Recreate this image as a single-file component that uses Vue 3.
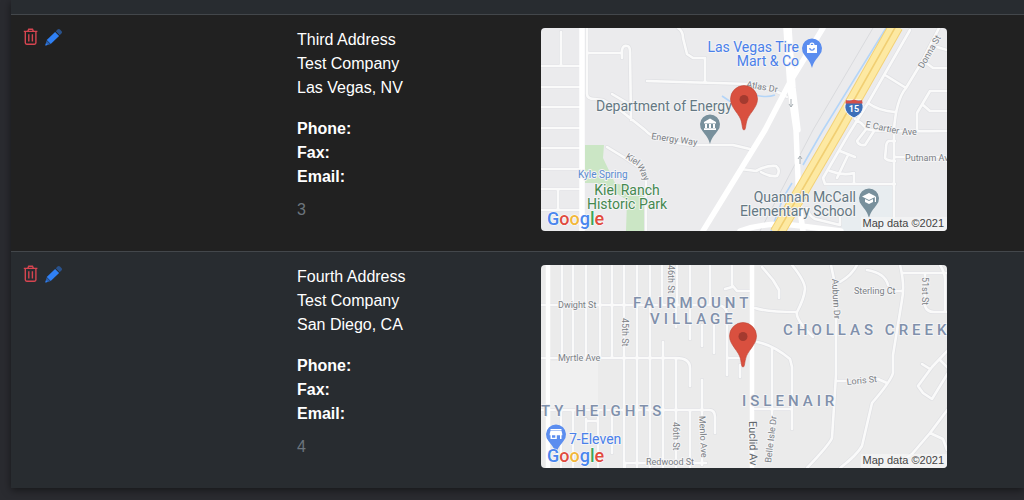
<template>
  <div class="page">
    <div class="panel">
      <table>
        <colgroup>
          <col class="c-actions" />
          <col class="c-address" />
          <col />
        </colgroup>
        <tbody>
          <tr v-for="a in addresses" :key="a.id">
            <td>
              <div class="actions">
                <button class="del" aria-label="Delete">
                  <svg width="16" height="18" viewBox="0 0 16 18" fill="none" stroke="currentColor" stroke-width="1.4">
                    <path d="M.8 3.400h13.600M4.800 3.200l.9-2h3.800l.9 2M2.300 3.600v11.200c0 .9.5 1.400 1.400 1.400h7.800c.9 0 1.400-.5 1.400-1.400V3.600M5.800 6.200v7.200M9.400 6.200v7.200" />
                  </svg>
                </button>
                <button class="edit" aria-label="Edit">
                  <svg width="17" height="17" viewBox="0 0 17 17">
                    <path d="M10.100 2.900l4 4-8.400 8.200-4-4z" fill="#2f80f5" />
                    <path d="M1.600 11.600L.4 16.500l4.900-1.200z" fill="#2a62b4" />
                    <path d="M10.800 2.300l1.700-1.700c.8-.8 1.700-.8 2.500 0l1.400 1.400c.8.8.8 1.700 0 2.500l-1.700 1.700z" fill="#29528c" />
                    <path d="M.9 14.200l-.6 2.400 2.400-.6z" fill="#2f80f5" />
                  </svg>
                </button>
              </div>
            </td>
            <td>
              <p>{{ a.name }}<br />{{ a.company }}<br />{{ a.city }}</p>
              <p class="contact"><b>Phone:</b><br /><b>Fax:</b><br /><b>Email:</b></p>
              <div class="num">{{ a.id }}</div>
            </td>
            <td>
              <svg class="map" viewBox="0 0 406 203">
                <rect width="406" height="203" :fill="a.map.ground" />
                <path v-for="(s, i) in a.map.areas" :key="'s' + i" :d="s.d" :fill="s.fill" />
                <path v-for="(s, i) in a.map.lines" :key="'l' + i" :d="s.d" :stroke="s.color" :stroke-width="s.w" fill="none" />
                <g fill="none" stroke-linecap="round" stroke-linejoin="round">
                  <path :d="a.map.roads" stroke="#e0e1e4" stroke-width="4" />
                  <path :d="a.map.roads" stroke="#fafafa" stroke-width="2.600" />
                  <path :d="a.map.wide" stroke="#fff" :stroke-width="a.map.wideW" />
                </g>
                <g v-if="a.map.highway" fill="none">
                  <path :d="a.map.highway" stroke="#f3d277" stroke-width="15" />
                  <path :d="a.map.highway" stroke="#fde9a2" stroke-width="13" />
                  <path :d="a.map.highway" stroke="#f1cf73" stroke-width="1.600" />
                </g>
                <g v-if="a.map.highway">
                  <path d="M306 72h14l2 5c1 6-3 10-9 13-6-3-10-7-9-13z" fill="#3d6fb8" stroke="#fff" />
                  <path d="M305 72q4 1.500 8-.5q4 2 8 .5l.7 3.500h-17.400z" fill="#d3504a" />
                  <text x="313" y="84" class="shield">15</text>
                  <path d="M250 71v8m-2-3l2 3 2-3M259 136v-8m-2 3l2-3 2 3" fill="none" stroke="#a9b0b5" />
                </g>
                <text
                  v-for="(t, i) in a.map.labels"
                  :key="'t' + i"
                  :class="t.cls"
                  :x="t.x"
                  :y="t.y"
                  :transform="t.r ? `rotate(${t.r} ${t.x} ${t.y})` : null"
                >{{ t.text }}</text>
                <g v-for="(p, i) in a.map.pins" :key="'p' + i" :transform="`translate(${p.x} ${p.y})`">
                  <path d="M0 20C-1.500 14-4.500 11-7.500 7A10 10 0 1 1 7.500 7C4.500 11 1.500 14 0 20z" :fill="p.fill" />
                  <path :d="glyphs[p.icon]" fill="#fff" fill-rule="evenodd" />
                </g>
                <g :transform="`translate(${a.map.marker} 71)`">
                  <path d="M0 31C-1.500 31-1.500 28-2.500 23C-4 15-13.500 9-13.500 0A13.500 13.500 0 0 1 13.500 0C13.500 9 4 15 2.500 23C1.500 28 1.500 31 0 31z" fill="#d9503f" stroke="#bd4536" stroke-width=".6" />
                  <circle cy=".5" r="4.500" fill="#a43a2f" />
                </g>
                <text x="6" y="197" class="google">
                  <tspan fill="#4a86ee">G</tspan><tspan fill="#e04b3e">o</tspan><tspan fill="#f2b73a">o</tspan><tspan fill="#4a86ee">g</tspan><tspan fill="#3ba55b">l</tspan><tspan fill="#e04b3e">e</tspan>
                </text>
                <rect x="320" y="189" width="86" height="14" fill="#f5f5f5" fill-opacity=".7" />
                <text x="403" y="199" class="credit">Map data ©2021</text>
              </svg>
            </td>
          </tr>
        </tbody>
      </table>
    </div>
  </div>
</template>

<script setup>
// white symbols inside the place pins
const glyphs = {
  bag: 'M-5-3h2.500a2.500 2.500 0 0 1 5 0H5v8H-5zM-1.300-3h2.600a1.300 1.300 0 0 0-2.600 0zM-2.800 0a2.800 2.800 0 0 0 5.600 0h-1.200a1.600 1.600 0 0 1-3.200 0z',
  museum: 'M0-5.500L6-2v1.500H-6V-2zM-5 0h2v4h-2zM-1 0h2v4h-2zM3 0h2v4H3zM-6 4.300H6V6H-6z',
  school: 'M0-5L7-1.500 0 2-7-1.500zM-4 1L0 3 4 1v3L0 6-4 4zM5.800-1H7v5H5.800z',
  shop: 'M-5.500-5h11v1.200h-11zM-5.500-3.200h11l.8 3.200v1.300H5.500V5H4V1.300H.8V5h-6.300V1.300h-.8V0zM-4 1.300v2.400h3.300V1.300z',
}

const vegas = {
  marker: 203,
  wideW: 5.5,
  ground: '#ebebed',
  areas: [
    { d: 'M285 158h67v45h-50z', fill: '#e8edf0' },
    { d: 'M44 117h19l-1 13 12 25 29 8v40H85l1-31-16-10-14-7H44z', fill: '#cbe6c5' },
  ],
  lines: [
    { d: 'M332 0L272 102 219 203', color: '#d9dadd', w: 1 },
    { d: 'M345 0L282 102 262 137M251 155L242 170 230 203M181 68l9 6M214 67q12 3 20 0', color: '#b4d5f8', w: 1.6 },
  ],
  roads:
    'M20 4V38M0 38H41M0 59H41M0 79H41M0 100H41M0 120H41M0 141H41M0 161H41M0 182H41M17 161V182' +
    'M46 0V66Q46 71 54 71L62 72 79 82 104 102Q114 114 152 117L192 117 209 121M46 25H81V30M81 25V22Q82 17 86 18Q89 18 89 24L90 92M71 66L88 76' +
    'M137 0Q142 3 142 10L146 26 152 30H164V54M106 53L209 56Q232 60 246 69' +
    'M369 2L327 75 307 107 282 150 284 156H354M344 47L365 60M327 75Q338 83 354 84' +
    'M398 0L379 37 365 60Q355 72 353 102V203M396 19L406 22M384 34L392 40H406M406 63H389L376 85V102M382 77L389 83H406' +
    'M314 91L320 95 326 101Q332 104 406 103M326 100L316 113Q318 118 324 117L333 103M354 113H348Q345 114 345 120L344 130Q346 133 354 133M354 129H406' +
    'M299 123L314 129M296 150L307 127M289 143Q302 148 313 145V156M199 141Q208 142 215 143 226 137 235 138 240 142 236 148 228 149 220 144' +
    'M266 180Q268 188 274 191L299 197V184M66 119L84 130 99 140Q105 145 105 152V203',
  wide:
    'M41 0V203M282 0L249 54 224 102 162 203M245 0L249 60 255 102 257 150V170M248 0L252 60 257 102M257 168L262 203M199 203Q226 193 260 198L300 203',
  highway: 'M355-2L296 102 236 205',
  labels: [
    { text: 'Las Vegas Tire', x: 258, y: 24, cls: 'poi blue end' },
    { text: 'Mart & Co', x: 258, y: 38, cls: 'poi blue end' },
    { text: 'Department of Energy', x: 55, y: 83, cls: 'poi gray' },
    { text: 'Quannah McCall', x: 315, y: 174, cls: 'poi gray end' },
    { text: 'Elementary School', x: 315, y: 188, cls: 'poi gray end' },
    { text: 'Kyle Spring', x: 37, y: 150, cls: 'water' },
    { text: 'Kiel Ranch', x: 86, y: 167, cls: 'poi green mid' },
    { text: 'Historic Park', x: 86, y: 181, cls: 'poi green mid' },
    { text: 'Atlas Dr', x: 205, y: 59, r: 10, cls: 'street' },
    { text: 'Energy Way', x: 110, y: 111, r: 8, cls: 'street' },
    { text: 'Kiel', x: 84, y: 130, r: 33, cls: 'street' },
    { text: 'Way', x: 96, y: 138, r: 64, cls: 'street' },
    { text: 'Donna St', x: 382, y: 41, r: -60, cls: 'street' },
    { text: 'E Cartier', x: 324, y: 99, r: 12, cls: 'street' },
    { text: 'Ave', x: 361, y: 107, cls: 'street' },
    { text: 'Putnam Av', x: 364, y: 133, cls: 'street' },
  ],
  pins: [
    { x: 271, y: 20, fill: '#5b8def', icon: 'bag' },
    { x: 169, y: 96, fill: '#78909c', icon: 'museum' },
    { x: 328, y: 170, fill: '#78909c', icon: 'school' },
  ],
}

const sanDiego = {
  marker: 202,
  wideW: 4.5,
  ground: '#ebebeb',
  areas: [{ d: 'M10 96H57V143H10z', fill: '#f0f0f0' }],
  lines: [],
  roads:
    'M21 0V93M32 0V93M45 0V93M59 0V93M71 0V93M83 0V203M96 0V203M109 0V203M121 0V40M136 0V40M149 0V40M169 0V40' +
    'M0 40H178Q186 42 186 50V110M135 40V62M149 40V74M161 60V81M173 60V88M122 77V203M135 93V203M199 100V112' +
    'M0 93H135Q149 93 149 103V121M0 145H168Q174 145 174 152V168M161 115V200M84 203V198H165M20 145V203M32 145V203M45 154V175M57 145V203M71 145V188M45 156H57M149 145V203' +
    'M191 0V20L196 26H211M184 24L191 22M186 93H204M221 2L232 15 238 25V33' +
    'M251 0Q264 16 264 24 263 34 256 47 254 54 272 72M214 43Q226 47 256 47M216 77Q232 80 249 94L251 102V164M231 83V184M214 144H251' +
    'M290 0L295 24V110L291 173Q288 180 266 203M299 17Q311 10 316 0M326 5Q344 8 347 20M352 26H361' +
    'M359 0Q364 20 361 35L352 90V108Q350 116 331 138L321 181Q316 190 299 203' +
    'M361 8H406M384 10V41Q386 47 393 47H406M399 0Q404 8 404 14V47M407 85L391 102 377 121 382 128 391 134 407 108M381 99L389 104M399 95L407 103' +
    'M407 144L389 168 371 189 350 203M389 168L402 174 406 185M296 116H308M337 114L346 118',
  wide: 'M7 0V203M211 0V203',
  labels: [
    { text: 'FAIRMOUNT', x: 92, y: 43, cls: 'area' },
    { text: 'VILLAGE', x: 109, y: 59, cls: 'area' },
    { text: 'CHOLLAS CREEK', x: 242, y: 70, cls: 'area' },
    { text: 'ISLENAIR', x: 201, y: 141, cls: 'area' },
    { text: 'TY HEIGHTS', x: 0, y: 151, cls: 'area' },
    { text: '7-Eleven', x: 28, y: 179, cls: 'poi blue' },
    { text: 'Dwight St', x: 17, y: 43, cls: 'street' },
    { text: 'Myrtle Ave', x: 17, y: 96, cls: 'street' },
    { text: '45th St', x: 81, y: 53, r: 90, cls: 'street' },
    { text: '46th St', x: 127, y: 0, r: 90, cls: 'street' },
    { text: '46th St', x: 132, y: 157, r: 90, cls: 'street' },
    { text: 'Menlo Ave', x: 158, y: 151, r: 87, cls: 'street' },
    { text: 'Redwood St', x: 105, y: 200, cls: 'street' },
    { text: 'Euclid Av', x: 208, y: 156, r: 89, cls: 'street big' },
    { text: 'Belle Isle Dr', x: 230, y: 198, r: -83, cls: 'street' },
    { text: 'Auburn Dr', x: 291, y: 14, r: 87, cls: 'street' },
    { text: 'Sterling Ct', x: 313, y: 29, cls: 'street' },
    { text: '51st St', x: 381, y: 12, r: 90, cls: 'street' },
    { text: 'Loris St', x: 306, y: 120, r: -6, cls: 'street' },
  ],
  pins: [{ x: 15, y: 169, fill: '#5b8def', icon: 'shop' }],
}

const addresses = [
  { id: 3, name: 'Third Address', company: 'Test Company', city: 'Las Vegas, NV', map: vegas },
  { id: 4, name: 'Fourth Address', company: 'Test Company', city: 'San Diego, CA', map: sanDiego },
]
</script>

<style>
body { background: #2a2b30; }
</style>

<style scoped>
.page { padding: 0 0 11px 11px; overflow: hidden; font-family: "Liberation Sans", Arial, sans-serif; font-size: 16px; line-height: 24px; color: #fff; }
.panel { background: #282c30; padding-top: 14px; box-shadow: 0 2px 8px rgba(0,0,0,0.5); }
table { width: 100%; table-layout: fixed; border-spacing: 0; }
.c-actions { width: 274px; }
.c-address { width: 244px; }
tr:nth-child(odd) { background: #212121; }
td { border-top: 1px solid #43474b; padding: 13px 12px 20px; vertical-align: top; text-align: left; }
p { margin: 0 0 17px; }
.contact { margin-bottom: 9px; }
.num { color: #6c757d; }
.actions { display: flex; gap: 6px; }
button { border: 0; padding: 0; background: none; cursor: pointer; display: block; height: 18px; }
button svg { display: block; }
.del { color: #d64550; }
.map { display: block; width: 100%; max-width: 406px; border-radius: 4px; }
.map text { font-family: Roboto, sans-serif; paint-order: stroke; stroke: #f4f4f5; stroke-width: 2px; stroke-linejoin: round; }
.map .poi { font-size: 14px; }
.map .blue { fill: #4a80ea; }
.map .gray { fill: #647883; }
.map .green { fill: #45894f; }
.map .end { text-anchor: end; }
.map .mid { text-anchor: middle; }
.map .water { font-size: 10px; fill: #5a8bd0; }
.map .street { font-size: 9px; fill: #7b8085; }
.map .big { font-size: 11px; fill: #62676c; }
.map .area { font-size: 15px; font-weight: 500; letter-spacing: 4px; fill: #8090ab; }
.map .shield { font-size: 9px; font-weight: bold; fill: #fff; stroke: none; text-anchor: middle; }
.map .google { font-size: 18px; font-weight: 500; stroke: #fff; stroke-width: 1px; }
.map .credit { font-family: "Liberation Sans", Arial, sans-serif; font-size: 11px; fill: #444; stroke: none; text-anchor: end; }
</style>
